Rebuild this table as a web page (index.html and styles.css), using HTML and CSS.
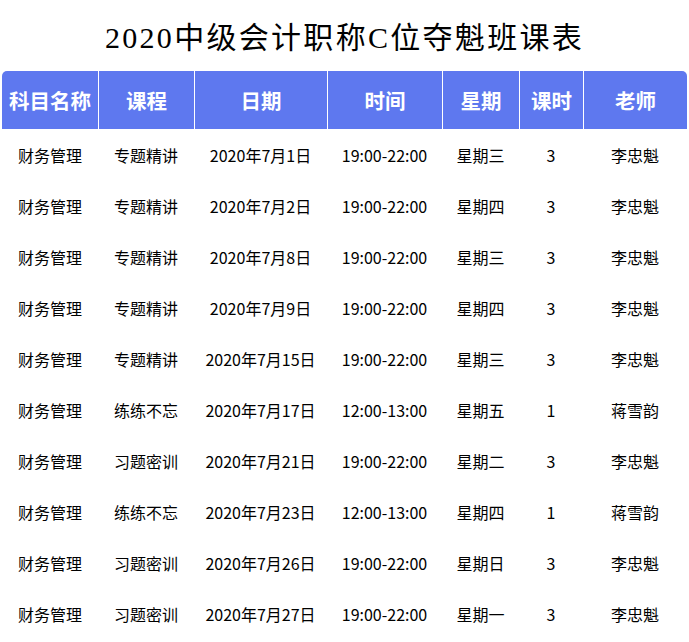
FILE: index.html
```html
<!DOCTYPE html>
<html lang="zh">
<head>
<meta charset="utf-8">
<link rel="stylesheet" href="styles.css">
</head>
<body>
<h1 class="title">2020中级会计职称C位夺魁班课表</h1>
<table class="schedule">
  <colgroup>
    <col class="c1"><col class="c2"><col class="c3"><col class="c4"><col class="c5"><col class="c6"><col class="c7">
  </colgroup>
  <thead>
    <tr><th>科目名称</th><th>课程</th><th>日期</th><th>时间</th><th>星期</th><th>课时</th><th>老师</th></tr>
  </thead>
  <tbody>
    <tr><td>财务管理</td><td>专题精讲</td><td>2020年7月1日</td><td>19:00-22:00</td><td>星期三</td><td>3</td><td>李忠魁</td></tr>
    <tr><td>财务管理</td><td>专题精讲</td><td>2020年7月2日</td><td>19:00-22:00</td><td>星期四</td><td>3</td><td>李忠魁</td></tr>
    <tr><td>财务管理</td><td>专题精讲</td><td>2020年7月8日</td><td>19:00-22:00</td><td>星期三</td><td>3</td><td>李忠魁</td></tr>
    <tr><td>财务管理</td><td>专题精讲</td><td>2020年7月9日</td><td>19:00-22:00</td><td>星期四</td><td>3</td><td>李忠魁</td></tr>
    <tr><td>财务管理</td><td>专题精讲</td><td>2020年7月15日</td><td>19:00-22:00</td><td>星期三</td><td>3</td><td>李忠魁</td></tr>
    <tr><td>财务管理</td><td>练练不忘</td><td>2020年7月17日</td><td>12:00-13:00</td><td>星期五</td><td>1</td><td>蒋雪韵</td></tr>
    <tr><td>财务管理</td><td>习题密训</td><td>2020年7月21日</td><td>19:00-22:00</td><td>星期二</td><td>3</td><td>李忠魁</td></tr>
    <tr><td>财务管理</td><td>练练不忘</td><td>2020年7月23日</td><td>12:00-13:00</td><td>星期四</td><td>1</td><td>蒋雪韵</td></tr>
    <tr><td>财务管理</td><td>习题密训</td><td>2020年7月26日</td><td>19:00-22:00</td><td>星期日</td><td>3</td><td>李忠魁</td></tr>
    <tr><td>财务管理</td><td>习题密训</td><td>2020年7月27日</td><td>19:00-22:00</td><td>星期一</td><td>3</td><td>李忠魁</td></tr>
  </tbody>
</table>
</body>
</html>
```
FILE: styles.css
```css
html, body {
  margin: 0;
  padding: 0;
  background: #ffffff;
}
body {
  font-family: "Noto Sans CJK SC", "Noto Sans", sans-serif;
  color: #000;
}
.title {
  margin: 0;
  height: 71px;
  line-height: 76px;
  text-align: center;
  font-family: "Liberation Serif", "Noto Sans CJK SC", serif;
  font-weight: normal;
  font-size: 30px;
  letter-spacing: 2.3px;
  color: #000;
}
.schedule {
  margin-left: 2px;
  width: 685px;
  border-collapse: separate;
  border-spacing: 0;
  table-layout: fixed;
}
.c1 { width: 96px; }
.c2 { width: 96px; }
.c3 { width: 133px; }
.c4 { width: 115px; }
.c5 { width: 77px; }
.c6 { width: 64px; }
.c7 { width: 104px; }
.schedule th {
  height: 58px;
  padding: 0;
  background: #5e78ef;
  color: #fff;
  font-size: 20.5px;
  font-weight: bold;
  text-align: center;
  border-left: 1px solid #ffffff;
}
.schedule th:first-child {
  border-left: none;
  border-top-left-radius: 5px;
}
.schedule th:last-child {
  border-top-right-radius: 5px;
}
.schedule td {
  height: 51px;
  padding: 0;
  text-align: center;
  font-size: 16px;
  color: #000;
}
```
